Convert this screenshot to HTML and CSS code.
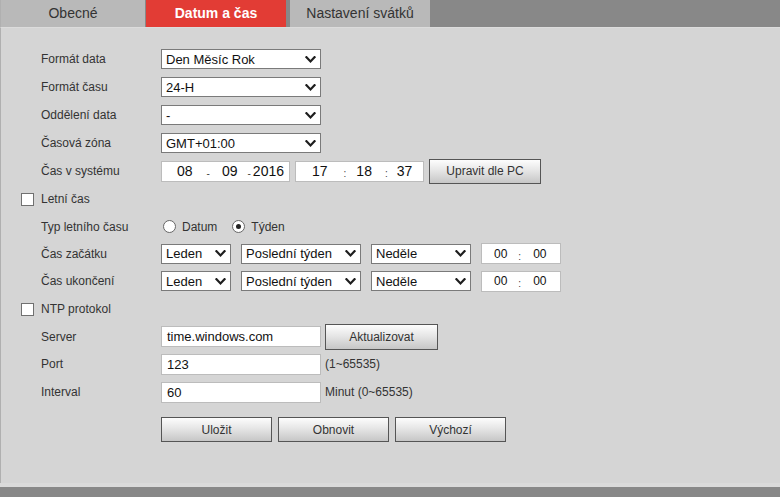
FILE: index.html
```html
<!DOCTYPE html>
<html lang="cs">
<head>
<meta charset="utf-8">
<title>Datum a čas</title>
<link rel="stylesheet" href="styles.css">
</head>
<body>
<div class="page">
  <div class="tabs">
    <div class="tab tab-first">Obecné</div>
    <div class="tab tab-active">Datum a čas</div>
    <div class="tab tab-last">Nastavení svátků</div>
  </div>

  <div class="content">
    <div class="row">
      <span class="label">Formát data</span>
      <div class="select w160"><span>Den Měsíc Rok</span><svg class="chev" viewBox="0 0 10 7"><path d="M1 1.2 L5 5.4 L9 1.2"/></svg></div>
    </div>
    <div class="row">
      <span class="label">Formát času</span>
      <div class="select w160"><span>24-H</span><svg class="chev" viewBox="0 0 10 7"><path d="M1 1.2 L5 5.4 L9 1.2"/></svg></div>
    </div>
    <div class="row">
      <span class="label">Oddělení data</span>
      <div class="select w160"><span>-</span><svg class="chev" viewBox="0 0 10 7"><path d="M1 1.2 L5 5.4 L9 1.2"/></svg></div>
    </div>
    <div class="row">
      <span class="label">Časová zóna</span>
      <div class="select w160"><span>GMT+01:00</span><svg class="chev" viewBox="0 0 10 7"><path d="M1 1.2 L5 5.4 L9 1.2"/></svg></div>
    </div>
    <div class="row">
      <span class="label">Čas v systému</span>
      <div class="field date-field">
        <span class="seg">08</span><span class="sep sep-d1">-</span><span class="seg seg-d2">09</span><span class="sep sep-d2">-</span><span class="seg seg-d3">2016</span>
      </div>
      <div class="field time-field">
        <span class="seg">17</span><span class="sep sep-t1">:</span><span class="seg seg-t2">18</span><span class="sep sep-t2">:</span><span class="seg seg-t3">37</span>
      </div>
      <button class="btn btn-pc">Upravit dle PC</button>
    </div>

    <div class="row check-row">
      <span class="checkbox"></span><span class="check-label">Letní čas</span>
    </div>
    <div class="row row-tight">
      <span class="label">Typ letního času</span>
      <span class="radio"></span><span class="radio-label">Datum</span>
      <span class="radio radio-on"></span><span class="radio-label">Týden</span>
    </div>
    <div class="row row-tight">
      <span class="label">Čas začátku</span>
      <div class="group">
        <div class="select w70"><span>Leden</span><svg class="chev" viewBox="0 0 10 7"><path d="M1 1.2 L5 5.4 L9 1.2"/></svg></div>
        <div class="select w120"><span>Poslední týden</span><svg class="chev" viewBox="0 0 10 7"><path d="M1 1.2 L5 5.4 L9 1.2"/></svg></div>
        <div class="select w100"><span>Neděle</span><svg class="chev" viewBox="0 0 10 7"><path d="M1 1.2 L5 5.4 L9 1.2"/></svg></div>
        <div class="field hm-field"><span class="seg">00</span><span class="sep sep-h">:</span><span class="seg seg-m">00</span></div>
      </div>
    </div>
    <div class="row">
      <span class="label">Čas ukončení</span>
      <div class="group">
        <div class="select w70"><span>Leden</span><svg class="chev" viewBox="0 0 10 7"><path d="M1 1.2 L5 5.4 L9 1.2"/></svg></div>
        <div class="select w120"><span>Poslední týden</span><svg class="chev" viewBox="0 0 10 7"><path d="M1 1.2 L5 5.4 L9 1.2"/></svg></div>
        <div class="select w100"><span>Neděle</span><svg class="chev" viewBox="0 0 10 7"><path d="M1 1.2 L5 5.4 L9 1.2"/></svg></div>
        <div class="field hm-field"><span class="seg">00</span><span class="sep sep-h">:</span><span class="seg seg-m">00</span></div>
      </div>
    </div>

    <div class="row check-row">
      <span class="checkbox"></span><span class="check-label">NTP protokol</span>
    </div>
    <div class="row row-tight">
      <span class="label">Server</span>
      <div class="input w160">time.windows.com</div>
      <button class="btn btn-update">Aktualizovat</button>
    </div>
    <div class="row">
      <span class="label">Port</span>
      <div class="input w160">123</div>
      <span class="hint">(1~65535)</span>
    </div>
    <div class="row">
      <span class="label">Interval</span>
      <div class="input w160">60</div>
      <span class="hint">Minut (0~65535)</span>
    </div>

    <div class="actions">
      <button class="btn btn-action">Uložit</button>
      <button class="btn btn-action">Obnovit</button>
      <button class="btn btn-action">Výchozí</button>
    </div>
  </div>

  <div class="footer"></div>
</div>
</body>
</html>
```

FILE: styles.css
```css
* { box-sizing: border-box; }

html, body {
  margin: 0;
  padding: 0;
}

body {
  font-family: "Liberation Sans", Arial, sans-serif;
  color: #333;
  background: #d5d5d5;
}

.page {
  width: 780px;
  height: 497px;
  display: flex;
  flex-direction: column;
  overflow: hidden;
}

/* ---------- tabs ---------- */
.tabs {
  height: 27px;
  flex: none;
  display: flex;
  background: #888888;
}

.tab {
  width: 140px;
  height: 27px;
  line-height: 27px;
  text-align: center;
  font-size: 14px;
  color: #333;
  background: #b9b9b9;
}

.tab-first {
  width: 145px;
  margin-right: 1px;
  border-left: 1px solid #b0b0b0;
}

.tab-active {
  margin-right: 4px;
  background: #e23c35;
  color: #fff;
  font-weight: bold;
}

/* ---------- content ---------- */
.content {
  flex: 1;
  border-top: 1px solid #dcdcdc;
  border-left: 1px solid #b0b0b0;
  padding-top: 17px;
  background: #d5d5d5;
}

.row {
  height: 28px;
  display: flex;
  align-items: center;
  padding-left: 40px;
  font-size: 12px;
}

.row-tight { height: 27px; }

.label {
  width: 120px;
  flex: none;
  color: #333;
}

.check-row { padding-left: 20px; }

.checkbox {
  width: 13px;
  height: 13px;
  border: 1px solid #707070;
  background: #fff;
  margin-right: 7px;
  margin-top: 1px;
}

.check-label { color: #333; }

/* ---------- selects ---------- */
.select {
  height: 20px;
  display: flex;
  align-items: center;
  justify-content: space-between;
  border: 1px solid #7a7a7a;
  background: #fff;
  padding: 0 4px 0 4px;
  font-size: 13px;
  color: #111;
  flex: none;
}

.chev {
  width: 11px;
  height: 7px;
  flex: none;
}

.chev path {
  fill: none;
  stroke: #1e1e1e;
  stroke-width: 2.2;
  stroke-linecap: square;
}

.w160 { width: 160px; }
.w70 { width: 70px; }
.w120 { width: 120px; }
.w100 { width: 100px; }

.group {
  display: flex;
  align-items: center;
  gap: 10px;
}

/* ---------- text fields ---------- */
.field, .input {
  height: 21px;
  border: 1px solid #bcbcbc;
  background: #fff;
  color: #111;
  flex: none;
}

.field {
  display: flex;
  align-items: center;
  font-size: 14px;
  overflow: hidden;
}

.seg { flex: none; }
.sep {
  flex: none;
  font-size: 10px;
  color: #444;
  padding-top: 5px;
}

.date-field { width: 129px; padding-left: 15px; }
.sep-d1 { margin-left: 14px; }
.seg-d2 { margin-left: 12px; }
.sep-d2 { margin-left: 10px; }
.seg-d3 { margin-left: 2px; }

.time-field { width: 129px; margin-left: 5px; padding-left: 16px; }
.sep-t1 { margin-left: 16px; }
.seg-t2 { margin-left: 10px; }
.sep-t2 { margin-left: 13px; }
.seg-t3 { margin-left: 9px; }

.hm-field { width: 80px; font-size: 12px; padding-left: 12px; }
.sep-h { margin-left: 11px; }
.seg-m { margin-left: 12px; }

.input {
  display: flex;
  align-items: center;
  padding-left: 5px;
  font-size: 13px;
}

.hint {
  margin-left: 4px;
  color: #333;
}

/* ---------- radios ---------- */
.radio {
  width: 13px;
  height: 13px;
  border: 1px solid #666;
  border-radius: 50%;
  background: #fff;
  margin-left: 2px;
  margin-right: 6px;
  display: flex;
  align-items: center;
  justify-content: center;
  flex: none;
}

.radio-on::after {
  content: "";
  width: 5px;
  height: 5px;
  border-radius: 50%;
  background: #222;
}

.radio-label { margin-right: 13px; }

/* ---------- buttons ---------- */
.btn {
  font-family: "Liberation Sans", Arial, sans-serif;
  font-size: 12px;
  color: #333;
  border: 1px solid #555;
  background: linear-gradient(#fdfdfd 0%, #e6e6e6 45%, #c6c6c6 100%);
  padding: 0;
  margin: 0;
  flex: none;
}

.btn-pc {
  width: 112px;
  height: 25px;
  margin-left: 5px;
}

.btn-update {
  width: 113px;
  height: 26px;
  margin-left: 4px;
}

.actions {
  display: flex;
  gap: 6px;
  margin-top: 11px;
  padding-left: 160px;
}

.btn-action {
  width: 111px;
  height: 25px;
}

/* ---------- footer ---------- */
.footer {
  flex: none;
  height: 14px;
  border-top: 4px solid #dadada;
  background: #888888;
}
```
